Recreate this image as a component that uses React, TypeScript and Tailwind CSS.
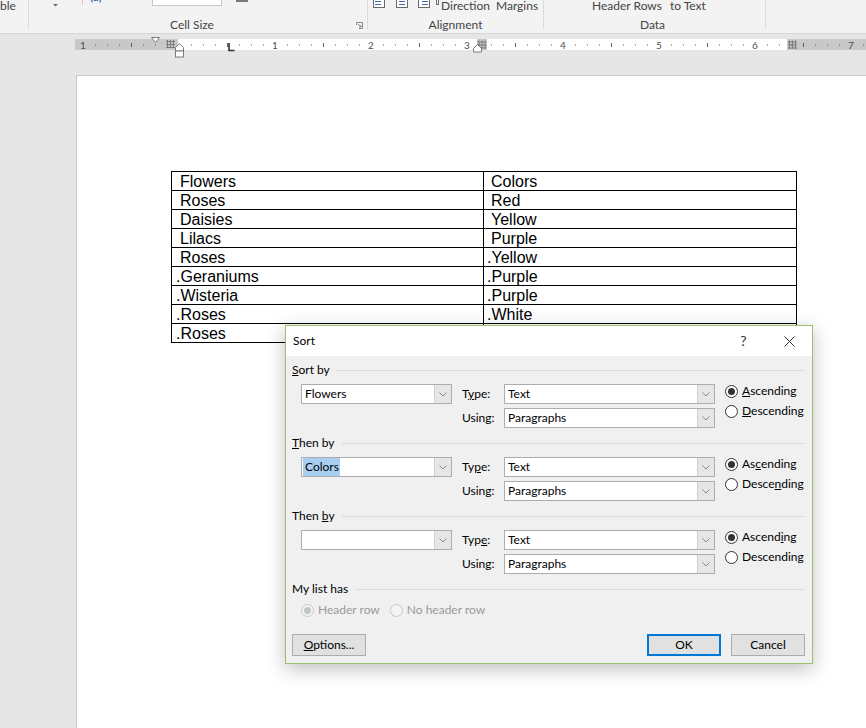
import React from "react";

const UI: React.CSSProperties = { fontFamily: "Lato, 'Noto Sans', 'Open Sans', sans-serif" };

function Chevron() {
  return (
    <svg width="8" height="5" viewBox="0 0 8 5">
      <polyline points="0.5,0.5 4,4 7.5,0.5" fill="none" stroke="#8a8a8a" strokeWidth="1" />
    </svg>
  );
}

function Combo({ children, className }: { children?: React.ReactNode; className: string }) {
  return (
    <div className={`flex h-[20px] border border-[#adadad] bg-white ${className}`}>
      <div className="flex flex-1 items-stretch pl-[1px] text-[12px] leading-[18px] text-black">{children}</div>
      <div className="flex w-[17px] items-center justify-center border-l border-[#cfcfcf] bg-[#e6e6e6]">
        <Chevron />
      </div>
    </div>
  );
}

function Radio({ checked, disabled, children }: { checked?: boolean; disabled?: boolean; children: React.ReactNode }) {
  return (
    <div className="flex h-[14px] items-center">
      <span
        className={
          disabled
            ? "flex h-[13px] w-[13px] items-center justify-center rounded-full border border-[#c8c8c8] bg-[#f4f4f4]"
            : "flex h-[13px] w-[13px] items-center justify-center rounded-full border border-[#333333] bg-white"
        }
      >
        {checked && (
          <span className={disabled ? "h-[7px] w-[7px] rounded-full bg-[#c4c4c4]" : "h-[7px] w-[7px] rounded-full bg-[#333333]"} />
        )}
      </span>
      <span className={disabled ? "ml-[4px] text-[12px] leading-[14px] text-[#9a9a9a]" : "ml-[4px] text-[12px] leading-[14px] text-black"}>
        {children}
      </span>
    </div>
  );
}

function SectionHeader({ children }: { children: React.ReactNode }) {
  return (
    <div className="flex h-[14px] items-center">
      <span className="text-[12px] leading-[14px] text-black">{children}</span>
      <div className="ml-[7px] h-px flex-1 bg-[#dadada]" />
    </div>
  );
}

function SortGroup({
  label,
  value,
  highlight,
  typeLabel,
  asc,
  desc,
  first,
}: {
  label: React.ReactNode;
  value?: string;
  highlight?: boolean;
  typeLabel: React.ReactNode;
  asc: React.ReactNode;
  desc: React.ReactNode;
  first?: boolean;
}) {
  return (
    <div className={first ? "" : "mt-[8px]"}>
      <SectionHeader>{label}</SectionHeader>
      <div className="mt-[7px] flex">
        <Combo className="ml-[9px] w-[151px]">
          {highlight ? (
            <span className="bg-[#a8cff2] pl-[2px] pr-[1px] leading-[18px]">{value}</span>
          ) : (
            <span className="pl-[2px]">{value}</span>
          )}
        </Combo>
        <div className="ml-[10px] flex flex-col gap-[4px]">
          <div className="flex items-center">
            <span className="w-[42px] text-[12px] leading-[20px]">{typeLabel}</span>
            <Combo className="w-[211px]">
              <span className="pl-[2px]">Text</span>
            </Combo>
          </div>
          <div className="flex items-center">
            <span className="w-[42px] text-[12px] leading-[20px]">Using:</span>
            <Combo className="w-[211px]">
              <span className="pl-[2px]">Paragraphs</span>
            </Combo>
          </div>
        </div>
        <div className="ml-[10px] flex flex-col gap-[6px]">
          <Radio checked>{asc}</Radio>
          <Radio>{desc}</Radio>
        </div>
      </div>
    </div>
  );
}

function GridMark({ x, y }: { x: number; y: number }) {
  return (
    <g stroke="#7a7a7a" strokeWidth="1">
      <line x1={x + 1.5} y1={y} x2={x + 1.5} y2={y + 8} />
      <line x1={x + 4.5} y1={y} x2={x + 4.5} y2={y + 8} />
      <line x1={x + 7.5} y1={y} x2={x + 7.5} y2={y + 8} />
      <line x1={x} y1={y + 1.5} x2={x + 9} y2={y + 1.5} />
      <line x1={x} y1={y + 4.5} x2={x + 9} y2={y + 4.5} />
      <line x1={x} y1={y + 7.5} x2={x + 9} y2={y + 7.5} />
    </g>
  );
}

function Ruler() {
  const origin = 179;
  const items: React.ReactNode[] = [];
  for (let k = -8; k <= 57; k++) {
    const x = origin + k * 12;
    if (x < 78 || x > 864) continue;
    if (k === 0) continue;
    if (k % 8 === 0) {
      items.push(
        <text key={k} x={x} y={14.5} fontSize="10" fill="#505050" textAnchor="middle" style={{ fontFamily: "Lato, 'Noto Sans', sans-serif" }}>
          {Math.abs(k / 8)}
        </text>
      );
    } else if (k % 4 === 0) {
      items.push(<line key={k} x1={x + 0.5} y1={9} x2={x + 0.5} y2={13} stroke="#606060" strokeWidth="1" />);
    } else {
      items.push(<rect key={k} x={x} y={10.5} width="1" height="1" fill="#606060" />);
    }
  }
  return (
    <svg width="866" height="41" viewBox="0 0 866 41" className="block">
      <rect x="75" y="5" width="103" height="11" fill="#c8c8c8" />
      <rect x="178" y="5" width="609" height="11" fill="#ffffff" />
      <rect x="787" y="5" width="79" height="11" fill="#c8c8c8" />
      <rect x="477" y="5" width="10" height="11" fill="#c8c8c8" />
      {items}
      <GridMark x={477.5} y={6.5} />
      <GridMark x={788} y={6.5} />
      <GridMark x={166} y={6} />
      <polygon points="151.5,3.5 159.5,3.5 155.5,8.5" fill="#ffffff" stroke="#7a7a7a" strokeWidth="1" />
      <polygon points="179.5,9.5 183.5,13.5 183.5,17 175.5,17 175.5,13.5" fill="#ffffff" stroke="#7a7a7a" strokeWidth="1" />
      <rect x="175.5" y="17" width="8" height="6" fill="#ffffff" stroke="#7a7a7a" strokeWidth="1" />
      <polygon points="477.5,10.5 481.5,14.5 481.5,18 473.5,18 473.5,14.5" fill="#ffffff" stroke="#7a7a7a" strokeWidth="1" />
      <polyline points="229,9 229,16.5 234.5,16.5" fill="none" stroke="#333333" strokeWidth="1.6" />
    </svg>
  );
}

function Sep() {
  return <div className="h-[29px] w-px shrink-0 bg-[#dadada]" />;
}

function AlignIcon({ align }: { align: "l" | "c" | "r" }) {
  const x1 = align === "l" ? 2 : align === "c" ? 3 : 4;
  return (
    <svg width="12" height="8" viewBox="0 0 12 8">
      <rect x="0.5" y="-2" width="11" height="9.5" fill="#ffffff" stroke="#6b6b6b" strokeWidth="1" />
      <line x1={x1} y1="1.5" x2={x1 + 6} y2="1.5" stroke="#3a68a8" strokeWidth="1" />
      <line x1={x1} y1="4.5" x2={x1 + 6} y2="4.5" stroke="#3a68a8" strokeWidth="1" />
    </svg>
  );
}

function Ribbon() {
  return (
    <div className="flex h-[34px] overflow-hidden border-b border-[#d5d5d5] bg-[#f3f3f3] text-[12px] text-[#444444]">
      <div className="w-[28px] shrink-0 leading-[16px]">
        <div className="-mt-[2px]">ble</div>
      </div>
      <Sep />
      <div className="flex w-[338px] shrink-0 flex-col">
        <div className="flex h-[17px] items-start">
          <div className="w-[24px] shrink-0" />
          <svg width="5" height="8" viewBox="0 0 5 8" className="shrink-0">
            <polygon points="0,4 5,4 2.5,6.5" fill="#6a6a6a" />
          </svg>
          <div className="w-[24px] shrink-0" />
          <div className="h-[5px] w-px shrink-0 bg-[#c8c8c8]" />
          <div className="w-[7px] shrink-0" />
          <div className="w-[62px] shrink-0 text-[12px] leading-[12px] text-[#2b579a]">
            <div className="-mt-[9px]">(a)</div>
          </div>
          <div className="h-[6px] w-[70px] shrink-0 border border-t-0 border-[#c6c6c6] bg-white" />
          <div className="w-[14px] shrink-0" />
          <div className="h-[2px] w-[12px] shrink-0 bg-[#7a7a7a]" />
        </div>
        <div className="flex h-[16px] items-center">
          <span className="ml-[141px] leading-[16px]">Cell Size</span>
          <svg width="7" height="7" viewBox="0 0 7 7" className="ml-auto mr-[4px]">
            <polyline points="0.5,3 0.5,0.5 6.5,0.5 6.5,6.5 3,6.5" fill="none" stroke="#8a8a8a" strokeWidth="1" />
            <line x1="2" y1="2" x2="5" y2="5" stroke="#8a8a8a" strokeWidth="1" />
            <polyline points="5,3 5,5 3,5" fill="none" stroke="#8a8a8a" strokeWidth="1" />
          </svg>
        </div>
      </div>
      <Sep />
      <div className="flex w-[175px] shrink-0 flex-col">
        <div className="flex h-[17px] items-start">
          <div className="w-[5px] shrink-0" />
          <AlignIcon align="l" />
          <div className="w-[11px] shrink-0" />
          <AlignIcon align="c" />
          <div className="w-[10px] shrink-0" />
          <AlignIcon align="r" />
          <div className="w-[6px] shrink-0" />
          <div className="h-[5px] w-[3px] shrink-0 border-b border-l border-r border-[#6b6b6b]" />
          <span className="-mt-[2px] ml-[2px] leading-[16px]">Direction</span>
          <span className="-mt-[2px] ml-[6px] leading-[16px]">Margins</span>
        </div>
        <div className="flex h-[16px] items-center justify-center">
          <span className="leading-[16px]">Alignment</span>
        </div>
      </div>
      <Sep />
      <div className="flex w-[221px] shrink-0 flex-col">
        <div className="flex h-[17px] items-start">
          <span className="-mt-[2px] ml-[48px] leading-[16px]">Header Rows</span>
          <span className="-mt-[2px] ml-[8px] leading-[16px]">to Text</span>
        </div>
        <div className="flex h-[16px] items-center justify-center">
          <span className="mr-[4px] leading-[16px]">Data</span>
        </div>
      </div>
      <Sep />
      <div className="flex-1" />
    </div>
  );
}

const rows: [string, boolean, string, boolean][] = [
  ["Flowers", false, "Colors", false],
  ["Roses", false, "Red", false],
  ["Daisies", false, "Yellow", false],
  ["Lilacs", false, "Purple", false],
  ["Roses", false, "Yellow", true],
  ["Geraniums", true, "Purple", true],
  ["Wisteria", true, "Purple", true],
  ["Roses", true, "White", true],
  ["Roses", true, "White", true],
];

function Cell({ text, dot, left }: { text: string; dot: boolean; left: boolean }) {
  return (
    <div className={left ? "h-[18px] w-[312px] border-r border-black pl-[8px] leading-[20px]" : "h-[18px] w-[311px] pl-[7px] leading-[20px]"}>
      {dot && <span className="-ml-[4px]">.</span>}
      {text}
    </div>
  );
}

function DocTable() {
  return (
    <div
      className="ml-[94px] mt-[95px] w-[626px] border border-black text-[16px] text-black"
      style={{ fontFamily: "'Liberation Sans', Arial, sans-serif" }}
    >
      {rows.map((r, i) => (
        <div key={i} className={i === 0 ? "flex" : "flex border-t border-black"}>
          <Cell text={r[0]} dot={r[1]} left />
          <Cell text={r[2]} dot={r[3]} left={false} />
        </div>
      ))}
    </div>
  );
}

function SortDialog() {
  return (
    <div
      className="absolute left-[285px] top-[325px] w-[528px] border border-[#9fbe6c] bg-[#f0f0f0] text-[12px] text-black shadow-[0_5px_18px_rgba(0,0,0,0.25)]"
      style={UI}
    >
      <div className="flex h-[30px] items-center bg-white">
        <span className="flex-1 pl-[7px] leading-[16px]">Sort</span>
        <span className="flex w-[46px] justify-center pl-[1px] text-[14px] leading-[16px] text-[#333333]">?</span>
        <span className="flex w-[46px] items-center justify-center">
          <svg width="11" height="11" viewBox="0 0 11 11">
            <line x1="0.5" y1="0.5" x2="10.5" y2="10.5" stroke="#333333" strokeWidth="1" />
            <line x1="10.5" y1="0.5" x2="0.5" y2="10.5" stroke="#333333" strokeWidth="1" />
          </svg>
        </span>
      </div>
      <div className="pb-[7px] pl-[6px] pr-[7px] pt-[7px]">
        <SortGroup
          first
          label={
            <>
              <u>S</u>ort by
            </>
          }
          value="Flowers"
          typeLabel={
            <>
              T<u>y</u>pe:
            </>
          }
          asc={
            <>
              <u>A</u>scending
            </>
          }
          desc={
            <>
              <u>D</u>escending
            </>
          }
        />
        <SortGroup
          label={
            <>
              <u>T</u>hen by
            </>
          }
          value="Colors"
          highlight
          typeLabel={
            <>
              Ty<u>p</u>e:
            </>
          }
          asc={
            <>
              As<u>c</u>ending
            </>
          }
          desc={
            <>
              Desce<u>n</u>ding
            </>
          }
        />
        <SortGroup
          label={
            <>
              Then <u>b</u>y
            </>
          }
          value=""
          typeLabel={
            <>
              Typ<u>e</u>:
            </>
          }
          asc={
            <>
              Ascend<u>i</u>ng
            </>
          }
          desc={
            <>
              Descendin<u>g</u>
            </>
          }
        />
        <div className="mt-[8px]">
          <SectionHeader>My list has</SectionHeader>
        </div>
        <div className="ml-[9px] mt-[7px] flex gap-[10px]">
          <Radio checked disabled>
            Header row
          </Radio>
          <Radio disabled>No header row</Radio>
        </div>
        <div className="mt-[17px] flex items-center">
          <button className="flex h-[22px] w-[74px] items-center justify-center border border-[#adadad] bg-[#e1e1e1] text-[12px] leading-[14px]">
            <span>
              <u>O</u>ptions...
            </span>
          </button>
          <div className="flex-1" />
          <button className="flex h-[22px] w-[74px] items-center justify-center border-2 border-[#0078d7] bg-[#e1e1e1] text-[12px] leading-[14px]">
            OK
          </button>
          <button className="ml-[10px] flex h-[22px] w-[74px] items-center justify-center border border-[#adadad] bg-[#e1e1e1] text-[12px] leading-[14px]">
            Cancel
          </button>
        </div>
      </div>
    </div>
  );
}

export default function App() {
  return (
    <div className="relative h-[728px] w-[866px] overflow-hidden bg-[#e6e6e6]" style={UI}>
      <Ribbon />
      <Ruler />
      <div className="ml-[76px] h-[653px] border-l border-t border-[#c8c8c8] bg-white">
        <DocTable />
      </div>
      <SortDialog />
    </div>
  );
}
